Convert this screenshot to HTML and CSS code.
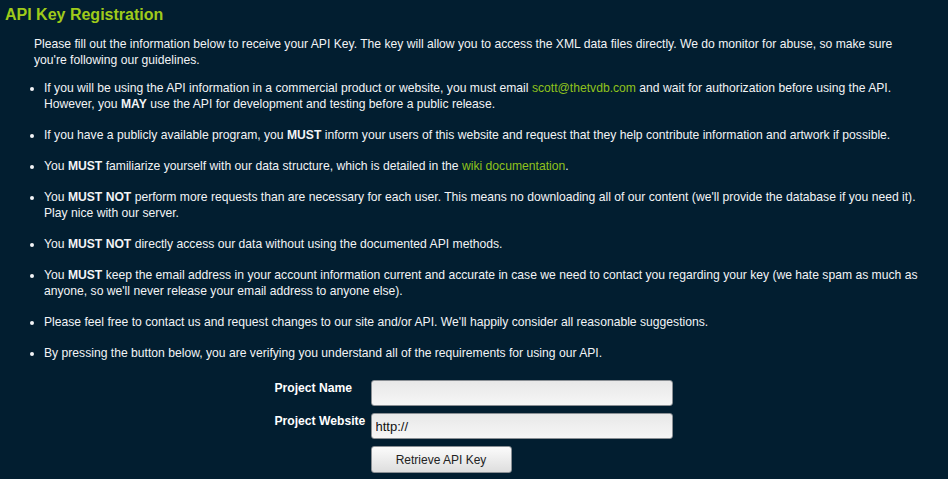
FILE: index.html
```html
<!DOCTYPE html>
<html lang="en">
<head>
  <meta charset="UTF-8">
  <title>API Key Registration</title>
  <link rel="stylesheet" href="styles.css">
</head>
<body>
  <h1 class="page-title">API Key Registration</h1>
  <div class="content">
    <p>Please fill out the information below to receive your API Key. The key will allow you to access the XML data files directly. We do monitor for abuse, so make sure you're following our guidelines.</p>

    <ul class="rules">
      <li>If you will be using the API information in a commercial product or website, you must email <a href="#">scott@thetvdb.com</a> and wait for authorization before using the API. However, you <b>MAY</b> use the API for development and testing before a public release.</li>
      <li>If you have a publicly available program, you <b>MUST</b> inform your users of this website and request that they help contribute information and artwork if possible.</li>
      <li>You <b>MUST</b> familiarize yourself with our data structure, which is detailed in the <a href="#">wiki documentation</a>.</li>
      <li>You <b>MUST NOT</b> perform more requests than are necessary for each user. This means no downloading all of our content (we'll provide the database if you need it). Play nice with our server.</li>
      <li>You <b>MUST NOT</b> directly access our data without using the documented API methods.</li>
      <li>You <b>MUST</b> keep the email address in your account information current and accurate in case we need to contact you regarding your key (we hate spam as much as anyone, so we'll never release your email address to anyone else).</li>
      <li>Please feel free to contact us and request changes to our site and/or API. We'll happily consider all reasonable suggestions.</li>
      <li>By pressing the button below, you are verifying you understand all of the requirements for using our API.</li>
    </ul>

    <form class="key-form" onsubmit="return false;">
      <label for="projectname">Project Name</label>
      <input type="text" id="projectname" name="projectname">
      <label for="projectwebsite">Project Website</label>
      <input type="text" id="projectwebsite" name="projectwebsite" value="http://">
      <span></span>
      <button type="submit">Retrieve API Key</button>
    </form>
  </div>
</body>
</html>
```

FILE: styles.css
```css
body {
  margin: 0;
  padding: 0 5px;
  background: #021e30;
  color: #f2f4f6;
  font-family: "Liberation Sans", Arial, sans-serif;
  font-size: 12.15px;
  line-height: 16px;
}

.page-title {
  margin: 0;
  padding-top: 4px;
  color: #9fcb1a;
  font-size: 16px;
  line-height: 21px;
  font-weight: bold;
}

.content {
  margin: 11px 18px 0 29px;
}

.content p {
  margin: 0 0 12px 0;
}

.content a {
  color: #8fc21c;
  text-decoration: none;
}

.rules {
  margin: 0;
  padding-left: 10px;
}

.rules li {
  margin-bottom: 15px;
}

.key-form {
  display: grid;
  grid-template-columns: 96px 302px;
  justify-content: center;
  row-gap: 7px;
  padding-top: 4px;
  padding-right: 12px;
}

.key-form label {
  align-self: start;
  font-weight: bold;
  color: #fff;
}

.key-form input {
  box-sizing: border-box;
  height: 26px;
  width: 302px;
  margin: 0;
  padding: 0 4px;
  border: 1px solid #8a8f94;
  border-radius: 3px;
  background: linear-gradient(#e8e8e8, #f6f6f6);
  font-family: "Liberation Sans", Arial, sans-serif;
  font-size: 13px;
  color: #111;
}

.key-form button {
  box-sizing: border-box;
  width: 141px;
  height: 27px;
  margin: 0;
  border: 1px solid #8a8f94;
  border-radius: 3px;
  background: linear-gradient(#fbfbfb, #dedede);
  font-family: "Liberation Sans", Arial, sans-serif;
  font-size: 12px;
  color: #222;
  cursor: pointer;
}
```
